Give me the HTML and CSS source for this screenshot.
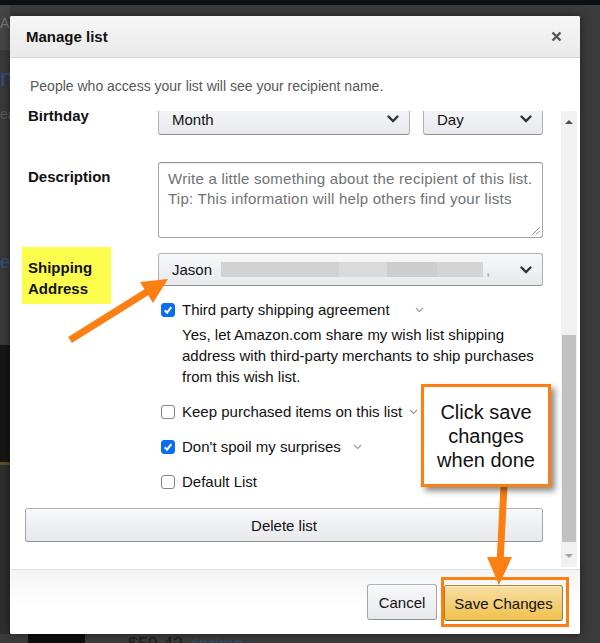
FILE: index.html
```html
<!DOCTYPE html>
<html lang="en">
<head>
    <meta charset="UTF-8">
    <title>Manage list</title>
    <link rel="stylesheet" href="styles.css">
</head>
<body>
    <div class="page">
        <div class="page-nav"></div>
        <div class="page-main">
            <div class="page-side">
                <div class="side-top">A</div>
                <div class="side-mid"><span class="side-n">n</span><span class="side-ear">ear</span><span class="side-e">e</span></div>
                <div class="side-dark"></div>
                <div class="side-gold"></div>
                <div class="side-low"></div>
            </div>
        </div>
        <div class="page-bottom">
            <span class="bottom-img"></span>
            <span class="bottom-price">$59.43</span>
            <span class="bottom-prime">&#10003;prime</span>
        </div>
    </div>

    <div class="dialog">
        <div class="dialog-head">
            <h1>Manage list</h1>
            <svg class="close" width="11" height="11" viewBox="0 0 11 11"><path d="M1.5 1.5l8 8M9.5 1.5l-8 8"/></svg>
        </div>
        <p class="intro">People who access your list will see your recipient name.</p>

        <div class="scroller">
            <div class="scroll-view">
                <div class="scroll-content">
                    <div class="form-row row-birthday">
                        <div class="label">Birthday</div>
                        <div class="birthday">
                            <div class="select select-month">
                                <span>Month</span>
                                <svg class="chev" width="12" height="8" viewBox="0 0 12 8"><path d="M1.5 1.5l4.5 4.5 4.5-4.5"/></svg>
                            </div>
                            <div class="select select-day">
                                <span>Day</span>
                                <svg class="chev" width="12" height="8" viewBox="0 0 12 8"><path d="M1.5 1.5l4.5 4.5 4.5-4.5"/></svg>
                            </div>
                        </div>
                    </div>

                    <div class="form-row row-desc">
                        <div class="label">Description</div>
                        <div class="textarea">
                            <span class="placeholder">Write a little something about the recipient of this list.<br>Tip: This information will help others find your lists</span>
                            <svg class="grip" width="8" height="8" viewBox="0 0 8 8"><path d="M7.5 0.5l-7 7M7.5 4l-3.5 3.5"/></svg>
                        </div>
                    </div>

                    <div class="form-row row-ship">
                        <div class="label label-mark">Shipping<br>Address</div>
                        <div class="ship">
                            <div class="select select-ship">
                                <span class="ship-name">Jason <span class="blur blur-1"></span><span class="blur blur-2"></span><span class="blur blur-3"></span><span class="blur blur-4"></span><span class="comma">,</span></span>
                                <svg class="chev" width="12" height="8" viewBox="0 0 12 8"><path d="M1.5 1.5l4.5 4.5 4.5-4.5"/></svg>
                            </div>
                            <div class="options">
                                <div class="option">
                                    <span class="check checked"><svg width="10" height="10" viewBox="0 0 10 10"><path d="M1.8 5.2l2.3 2.4 4.2-5.4"/></svg></span>
                                    <span>Third party shipping agreement</span>
                                    <svg class="mini-chev chev-third" width="9" height="6" viewBox="0 0 9 6"><path d="M1 1l3.5 3.5L8 1"/></svg>
                                </div>
                                <p class="option-note">Yes, let Amazon.com share my wish list shipping<br>address with third-party merchants to ship purchases<br>from this wish list.</p>
                                <div class="option option-gap">
                                    <span class="check"></span>
                                    <span>Keep purchased items on this list</span>
                                    <svg class="mini-chev chev-keep" width="9" height="6" viewBox="0 0 9 6"><path d="M1 1l3.5 3.5L8 1"/></svg>
                                </div>
                                <div class="option option-gap">
                                    <span class="check checked"><svg width="10" height="10" viewBox="0 0 10 10"><path d="M1.8 5.2l2.3 2.4 4.2-5.4"/></svg></span>
                                    <span>Don't spoil my surprises</span>
                                    <svg class="mini-chev chev-spoil" width="9" height="6" viewBox="0 0 9 6"><path d="M1 1l3.5 3.5L8 1"/></svg>
                                </div>
                                <div class="option option-gap">
                                    <span class="check"></span>
                                    <span>Default List</span>
                                </div>
                            </div>
                        </div>
                    </div>

                    <button class="btn btn-delete">Delete list</button>
                </div>
            </div>
            <div class="scrollbar">
                <span class="sb-up"></span>
                <span class="sb-track"><span class="sb-thumb"></span></span>
                <span class="sb-down"></span>
            </div>
        </div>

        <div class="dialog-foot">
            <button class="btn btn-cancel">Cancel</button>
            <span class="mark-ring"><button class="btn btn-save">Save Changes</button></span>
        </div>
    </div>

    <svg class="arrows" width="600" height="643" viewBox="0 0 600 643">
        <line x1="70" y1="340" x2="150" y2="290"/>
        <polygon points="168,279 140,282 153,303"/>
        <line x1="504" y1="486" x2="500" y2="563"/>
        <polygon points="499,585 487,557 512,557"/>
    </svg>

    <div class="callout">Click save<br>changes<br>when done</div>
</body>
</html>
```

FILE: styles.css
```css
body {
    margin: 0;
    width: 600px;
    height: 643px;
    position: relative;
    overflow: hidden;
    background: #3b3b3b;
    font-family: Arial, "Liberation Sans", sans-serif;
    color: #111;
}

/* page behind the overlay */
.page {
    height: 643px;
    display: flex;
    flex-direction: column;
}
.page-nav {
    height: 5px;
    background: #0c1013;
}
.page-main {
    flex: 1;
    display: flex;
}
.page-side {
    width: 10px;
    display: flex;
    flex-direction: column;
    overflow: hidden;
    color: #777;
    font-size: 14px;
}
.side-top {
    height: 45px;
    background: #454545;
    padding-top: 10px;
    box-sizing: border-box;
}
.side-mid {
    height: 295px;
    background: #393939;
    display: flex;
    flex-direction: column;
}
.side-n {
    margin-top: 14px;
    color: #2e5480;
    font-size: 24px;
}
.side-ear {
    margin-top: 14px;
    color: #5a5a5a;
}
.side-e {
    margin-top: 130px;
    color: #2e5480;
    font-size: 18px;
}
.side-dark {
    height: 117px;
    background: #161616;
}
.side-gold {
    height: 3px;
    background: #5e4f22;
}
.side-low {
    flex: 1;
    background: #2e2e2e;
}
.page-bottom {
    height: 9px;
    display: flex;
    align-items: flex-start;
    font-size: 18px;
    line-height: 18px;
    overflow: hidden;
}
.bottom-img {
    width: 57px;
    height: 9px;
    margin-left: 28px;
    background: #0e0e0e;
}
.bottom-price {
    margin-left: 43px;
    margin-top: 1px;
    color: #1e1e1e;
}
.bottom-prime {
    margin-top: 1px;
    color: #2b4d6e;
    font-style: italic;
}

/* dialog */
.dialog {
    position: absolute;
    left: 10px;
    top: 16px;
    width: 570px;
    height: 618px;
    background: #fff;
    border-radius: 2px;
    box-shadow: 0 0 8px rgba(0, 0, 0, 0.5);
    display: flex;
    flex-direction: column;
    overflow: hidden;
}
.dialog-head {
    height: 41px;
    flex: none;
    display: flex;
    align-items: center;
    justify-content: space-between;
    padding: 0 18px 0 16px;
    background: linear-gradient(#f6f6f6, #eaeaea);
    border-bottom: 1px solid #d6d6d6;
}
.dialog-head h1 {
    margin: 0;
    font-size: 15px;
    font-weight: bold;
    color: #111;
}
.close path {
    stroke: #555;
    stroke-width: 2.4;
    fill: none;
}
.intro {
    margin: 0;
    height: 53px;
    flex: none;
    box-sizing: border-box;
    padding: 18px 0 0 20px;
    font-size: 14px;
    line-height: 20px;
    color: #565959;
}

.scroller {
    height: 458px;
    flex: none;
    display: flex;
}
.scroll-view {
    flex: 1;
    overflow: hidden;
}
.scroll-content {
    margin-top: -8px;
    padding: 0 18px 0 15px;
}
.form-row {
    display: grid;
    grid-template-columns: 133px 385px;
}
.label {
    padding: 3px 0 0 3px;
    font-size: 15px;
    font-weight: bold;
    line-height: 20px;
}
.row-desc {
    margin-top: 27px;
}
.row-desc .label {
    padding-top: 5px;
}
.row-ship {
    margin-top: 15px;
}
.label-mark {
    justify-self: start;
    margin: -6px 0 0 -3px;
    padding: 10px 19px 5px 6px;
    height: 42px;
    line-height: 21px;
    background: #fdfd4e;
}

.select {
    height: 32px;
    box-sizing: border-box;
    display: flex;
    align-items: center;
    justify-content: space-between;
    padding: 0 10px 0 13px;
    border: 1px solid #adb1b8;
    border-bottom-color: #8d9096;
    border-radius: 3px;
    background: linear-gradient(#f7f8fa, #e7e9ec);
    box-shadow: inset 0 1px 0 rgba(255, 255, 255, 0.6);
    font-size: 15px;
    color: #111;
}
.chev path {
    stroke: #333;
    stroke-width: 2.4;
    fill: none;
    stroke-linecap: round;
}
.birthday {
    display: flex;
    gap: 13px;
}
.select-month {
    width: 252px;
}
.select-day {
    width: 120px;
}
.textarea {
    height: 76px;
    box-sizing: border-box;
    position: relative;
    padding: 6px 9px;
    border: 1px solid #a6a6a6;
    border-top-color: #949494;
    border-radius: 3px;
    box-shadow: inset 0 1px 0 rgba(0, 0, 0, 0.07);
    font-size: 15px;
    line-height: 20px;
}
.placeholder {
    color: #6f7373;
    letter-spacing: 0.25px;
}
.grip {
    position: absolute;
    right: 2px;
    bottom: 2px;
}
.grip path {
    stroke: #8a8a8a;
    stroke-width: 1;
    fill: none;
}
.select-ship {
    height: 33px;
}
.ship-name {
    display: flex;
    align-items: center;
}
.blur {
    height: 15px;
    background: #d2d2d2;
}
.blur-1 {
    width: 118px;
    margin-left: 9px;
}
.blur-2 {
    width: 48px;
    background: #dadada;
}
.blur-3 {
    width: 50px;
    background: #cdcdcd;
}
.blur-4 {
    width: 46px;
    background: #d4d4d4;
}
.comma {
    margin-left: 3px;
    color: #999;
}

.options {
    padding: 13px 0 0 3px;
    font-size: 15px;
    line-height: 21px;
}
.option {
    display: flex;
    align-items: center;
}
.option-gap {
    margin-top: 14px;
}
.check {
    width: 14px;
    height: 14px;
    box-sizing: border-box;
    margin-right: 7px;
    border: 1px solid #858585;
    border-radius: 3px;
    background: #fff;
    display: flex;
    align-items: center;
    justify-content: center;
}
.check.checked {
    border-color: #0b6ef0;
    background: #0b6ef0;
}
.check path {
    stroke: #fff;
    stroke-width: 2;
    fill: none;
}
.mini-chev path {
    stroke: #9a9a9a;
    stroke-width: 1.2;
    fill: none;
}
.chev-third {
    margin-left: 25px;
}
.chev-keep {
    margin-left: 7px;
}
.chev-spoil {
    margin-left: 12px;
}
.option-note {
    margin: 4px 0 0 21px;
}

.btn {
    box-sizing: border-box;
    border: 1px solid #adb1b8;
    border-color: #adb1b8 #a2a6ac #8d9096;
    border-radius: 3px;
    background: linear-gradient(#f7f8fa, #e7e9ec);
    box-shadow: inset 0 1px 0 rgba(255, 255, 255, 0.6);
    font-family: Arial, "Liberation Sans", sans-serif;
    font-size: 15px;
    color: #111;
    padding: 0;
}
.btn-delete {
    display: block;
    width: 518px;
    height: 34px;
    margin-top: 16px;
}

.scrollbar {
    width: 16px;
    height: 456px;
    margin-right: 3px;
    background: #f1f1f1;
    display: flex;
    flex-direction: column;
    align-items: center;
}
.sb-up,
.sb-down {
    height: 22px;
    flex: none;
    display: flex;
    align-items: center;
}
.sb-up::before {
    content: "";
    border: 4px solid transparent;
    border-top: 0;
    border-bottom: 4px solid #505050;
}
.sb-down::before {
    content: "";
    border: 4px solid transparent;
    border-bottom: 0;
    border-top: 4px solid #a3a3a3;
}
.sb-track {
    flex: 1;
    width: 100%;
    display: flex;
    flex-direction: column;
    justify-content: flex-end;
}
.sb-thumb {
    height: 207px;
    margin: 0 1px 3px;
    background: #c1c1c1;
}

.dialog-foot {
    flex: 1;
    display: flex;
    align-items: center;
    justify-content: flex-end;
    gap: 4px;
    padding-right: 11px;
    border-top: 1px solid #e3e3e3;
    background: linear-gradient(#f4f4f4, #fff 60%);
}
.btn-cancel {
    width: 70px;
    height: 36px;
}
.mark-ring {
    display: flex;
    padding: 5px 3px 3px 0;
    border: 3px solid #fb7f12;
}
.btn-save {
    width: 119px;
    height: 36px;
    border-color: #a88734 #9c7e31 #846a29;
    background: linear-gradient(#f7dfa5, #f0c14b);
    box-shadow: inset 0 1px 0 rgba(255, 255, 255, 0.4);
}

/* annotations */
.arrows {
    position: absolute;
    left: 0;
    top: 0;
    pointer-events: none;
}
.arrows line {
    stroke: #fb7f12;
    stroke-width: 7;
}
.arrows polygon {
    fill: #fb7f12;
}
.callout {
    position: absolute;
    left: 421px;
    top: 384px;
    width: 130px;
    height: 103px;
    box-sizing: border-box;
    padding-top: 13px;
    border: 3px solid #fb7f12;
    background: #fff;
    box-shadow: 4px 4px 6px rgba(0, 0, 0, 0.45);
    font-family: Arial, "Liberation Sans", sans-serif;
    font-size: 20px;
    line-height: 24px;
    text-align: center;
    color: #111;
}
```
